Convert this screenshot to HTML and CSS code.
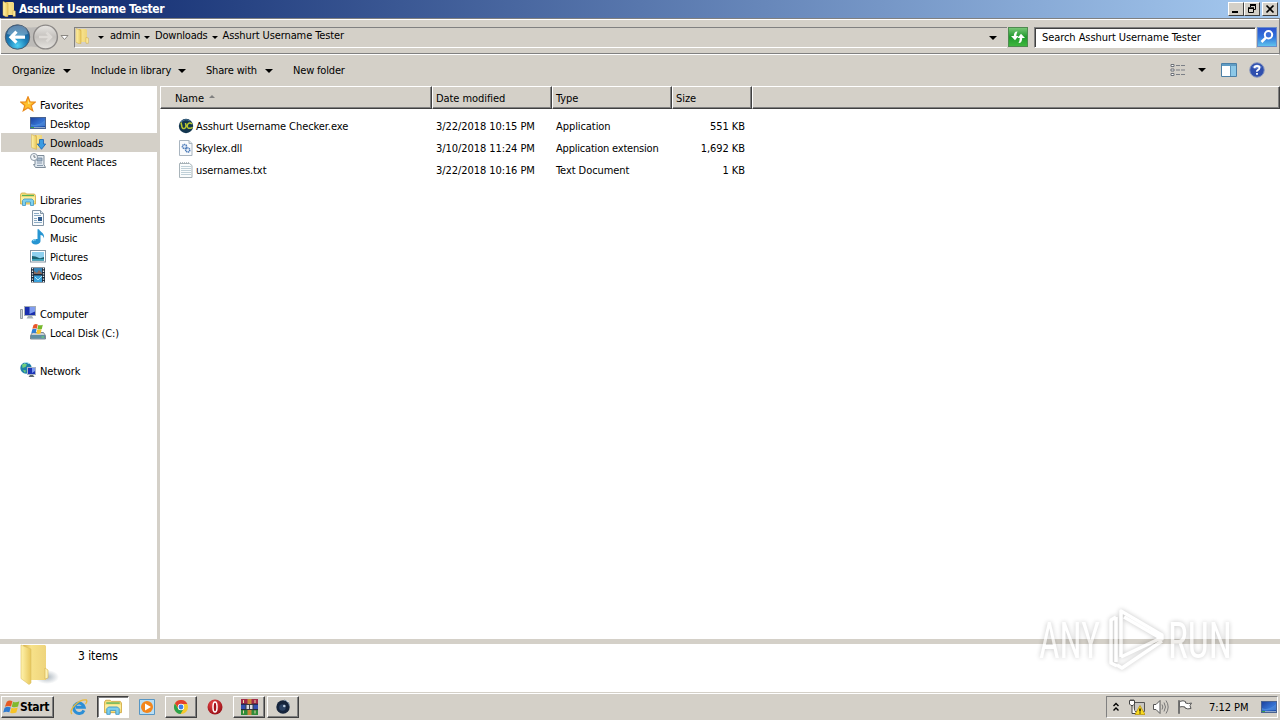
FILE: index.html
```html
<!DOCTYPE html>
<html lang="en">
<head>
    <meta charset="UTF-8">
    <meta name="viewport" content="width=device-width, initial-scale=1.0">
    <title>Asshurt Username Tester</title>
    <link rel="stylesheet" href="styles.css">
</head>
<body>

<!-- Shared icons -->
<svg class="sprite" width="0" height="0">
    <defs>
        <linearGradient id="gold" x1="0" x2="1"><stop offset="0" stop-color="#fff3ac"/><stop offset="1" stop-color="#e8c75c"/></linearGradient>
        <linearGradient id="goldBack" x1="0" x2="1"><stop offset="0" stop-color="#d9b14a"/><stop offset=".35" stop-color="#f7e28a"/><stop offset="1" stop-color="#eed47c"/></linearGradient>
        <linearGradient id="screen" x1="0" y1="0" x2="1" y2="1"><stop offset="0" stop-color="#1c3f9c"/><stop offset=".55" stop-color="#3572d2"/><stop offset="1" stop-color="#16409a"/></linearGradient>
        <radialGradient id="backBall" cx=".5" cy=".85" r=".85"><stop offset="0" stop-color="#4fd0f4"/><stop offset=".45" stop-color="#1c7fb8"/><stop offset="1" stop-color="#1b4f86"/></radialGradient>
        <linearGradient id="grayBall" x1="0" y1="0" x2="0" y2="1"><stop offset="0" stop-color="#e8e6e3"/><stop offset=".5" stop-color="#c4c1bd"/><stop offset="1" stop-color="#e6e4e0"/></linearGradient>
        <linearGradient id="green" x1="0" y1="0" x2="0" y2="1"><stop offset="0" stop-color="#7cc87a"/><stop offset=".5" stop-color="#1f9a2c"/><stop offset="1" stop-color="#3fb83e"/></linearGradient>
        <linearGradient id="blue" x1="0" y1="0" x2="0" y2="1"><stop offset="0" stop-color="#2c50cc"/><stop offset=".5" stop-color="#2f74dc"/><stop offset="1" stop-color="#62c6ee"/></linearGradient>
        <radialGradient id="redBall" cx=".4" cy=".3" r=".8"><stop offset="0" stop-color="#ec4a4a"/><stop offset="1" stop-color="#8f0810"/></radialGradient>

        <symbol id="folder" viewBox="0 0 16 16">
            <path d="M5 1h7l1 1v12H5z" fill="url(#goldBack)"/>
            <path d="M2 0.5l5 2v13l-2 .3-3-1.6z" fill="url(#gold)" stroke="#d5ad45" stroke-width=".5"/>
            <path d="M12 9.500l2.300.5v5.300h-2.300z" fill="#fff0a8" stroke="#cfa43a" stroke-width=".5"/>
        </symbol>
        <symbol id="star" viewBox="0 0 16 16">
            <path d="M8 .8l2 5 5.400.2-4.200 3.500 1.500 5.200L8 11.800l-4.700 2.900 1.500-5.200L.6 6 6 5.800z" fill="#ffc02c" stroke="#ea8a1c" stroke-width="1.200"/>
            <path d="M8 3.300l1 3.300 2.500.4L8 8z" fill="#ffe98a"/>
        </symbol>
        <symbol id="desktop" viewBox="0 0 16 16">
            <rect x=".5" y="2.500" width="15" height="11" fill="url(#screen)" stroke="#4a6390"/>
            <path d="M1 9q6 3 14-4v6H1z" fill="#5b9be6" opacity=".55"/>
            <path d="M1 12.500h14" stroke="#8fa6c8"/><path d="M1 12.500h3" stroke="#3aa04a"/>
        </symbol>
        <symbol id="downloads" viewBox="0 0 16 16">
            <path d="M5 1h7v13H5z" fill="url(#goldBack)"/>
            <path d="M1.500.5l5 2v13l-5-2z" fill="url(#gold)" stroke="#d5ad45" stroke-width=".5"/>
            <path d="M9.500 5.500h4v4.500h2.200l-4.200 5.300L7.300 10h2.200z" fill="#3a9be2" stroke="#1a5fb0" stroke-width=".8"/>
        </symbol>
        <symbol id="recent" viewBox="0 0 16 16">
            <path d="M5 2.500h9v9l1.500 3H5.500l-2-3H5z" fill="#dfe7ee" stroke="#7e8c99"/>
            <path d="M7 5h5v3H7zM7 10h5M7 12.500h6" fill="#9fb4c6" stroke="#71879c" stroke-width=".8"/>
            <circle cx="4" cy="4" r="3.500" fill="#f5f8fb" stroke="#8b98a6"/><path d="M4 2v2.200h1.700" fill="none" stroke="#4b5866" stroke-width=".8"/>
        </symbol>
        <symbol id="libraries" viewBox="0 0 16 16">
            <path d="M.5 3.500l1-1.500h4l1 1h8l1 1.500v8.500H.5z" fill="#f6df7c" stroke="#d0a843" stroke-width=".8"/>
            <path d="M2 4.500h12" stroke="#58b058" stroke-width="1.200"/><path d="M1 6h14v4H1z" fill="#fbeea0"/>
            <path d="M2.500 14.500v-5l1.500-1.500h8l1.500 1.500v5h-3v-3.500h-5v3.500z" fill="#7fd0ee" stroke="#3e95c4" stroke-width=".8"/>
        </symbol>
        <symbol id="documents" viewBox="0 0 16 16">
            <path d="M2.500.5h8l3 3v12h-11z" fill="#f7fafc" stroke="#8294a5"/><path d="M10.500.5v3h3" fill="#d5e1ea" stroke="#8294a5"/>
            <path d="M4 3.500h5M4 5.500h7M4 8.500h3M4 10.500h3M4 12.500h8" stroke="#8cabc4"/><path d="M8 7h4v4H8z" fill="#2f5b8e"/>
        </symbol>
        <symbol id="music" viewBox="0 0 16 16">
            <path d="M7.500 .3h1.500c1 3 6 3.300 5 9.200-.5-2.500-2-3.500-3.500-3.500V12c0 2.200-2.500 3.500-5 3.500S1.300 14 1.500 12.500 4 9.500 7.500 10z" fill="#2795d2"/>
            <path d="M3 12q1-1.300 3-1.200" stroke="#8fe0fa" fill="none"/>
        </symbol>
        <symbol id="pictures" viewBox="0 0 16 16">
            <rect x=".5" y="2.500" width="15" height="11.500" fill="#fff" stroke="#8896a3"/>
            <path d="M2 4h12v8.500H2z" fill="#8fd0ee"/><path d="M2 8q4 0 6 1.500t6-.5v3.500H2z" fill="#1c6270"/><path d="M2 11h12v1.500H2z" fill="#39a0b8"/>
        </symbol>
        <symbol id="videos" viewBox="0 0 16 16">
            <path d="M1 .5h14v15H1z" fill="#1c2a3a"/>
            <path d="M4 1h8v6H4z" fill="#3a85b8"/><path d="M4 8.500h8V15H4z" fill="#3aa2dc"/>
            <path d="M4 4l3 2 2-3 3 3v1H4z" fill="#8a6a5c"/><path d="M5 10l3 3 4-4" stroke="#a8e4f8" fill="none"/>
            <path d="M2.500 1v15M13.500 1v15" stroke="#e6edf2" stroke-width="1.300" stroke-dasharray="1.300 1.300"/>
        </symbol>
        <symbol id="computer" viewBox="0 0 16 16">
            <path d="M.5 4.500h2v9h-2z" fill="#cdd3d8" stroke="#7e8890" stroke-width=".8"/>
            <rect x="4.500" y="1.500" width="11" height="9" fill="#1a2fae" stroke="#a3adb6"/>
            <path d="M9.500 2H15v4.500L9.500 9z" fill="#7f9cf0"/><path d="M8 11h4l1.500 2.500h-7z" fill="#a9b3ba"/>
        </symbol>
        <symbol id="disk" viewBox="0 0 16 16">
            <path d="M2.500 8.500h11l2 3v3.500H.5v-3.500z" fill="#c8ced3" stroke="#66727b" stroke-width=".8"/><path d="M1 11h14v3.700H1z" fill="#5f8ea2"/><path d="M11.500 13h2.500" stroke="#6fe06a"/>
            <path d="M3.500.9q2.300-1.500 4.300-.3L6.800 4.700Q5 3.600 2.400 4.800z" fill="#e8562a"/><path d="M8.300.9q2 .9 4.500-.2L11.800 4.900q-2.300 1-4.500 0z" fill="#76b82c"/>
            <path d="M2.300 5.300q2.300-1.200 4.300-.1l-1 4q-2-1-4.300 0z" fill="#2d7fd6"/><path d="M7.200 5.400q2.200.9 4.400.1l-1 4q-2.200.8-4.300.1z" fill="#f8c42c"/>
        </symbol>
        <symbol id="network" viewBox="0 0 16 16">
            <circle cx="6" cy="6" r="5.700" fill="#1f7fa8"/><path d="M2 2.500Q5 1 7 2.500L5.500 5 2.500 6zM3 8l3 .5L5 11z" fill="#6fd07c"/>
            <path d="M4 1q3-1.500 5 .5" stroke="#bdf0fa" fill="none"/>
            <rect x="7.500" y="5.500" width="8" height="7" fill="#1c34b6" stroke="#aab4c6"/><path d="M12 6h3v3l-3 2z" fill="#7b9af0"/><path d="M10 13h3l1.500 2H8.500z" fill="#5c6870"/>
        </symbol>
        <symbol id="exe" viewBox="0 0 16 16">
            <circle cx="8" cy="8" r="7.200" fill="#12354f"/><path d="M3 4q4-4 9-1" stroke="#4f7da0" fill="none"/>
            <path d="M3 4.500l1 4.500q.5 2 2.300 1.500T8 8L7.500 5M14 6q-1.500-1.500-3.200-.8T9.300 8.300t2.700 2T14 9" stroke="#b9c832" stroke-width="1.500" fill="none"/>
        </symbol>
        <symbol id="dll" viewBox="0 0 16 16">
            <path d="M1.500.5h9.500l3 3v12H1.500z" fill="#f8fafc" stroke="#a9b5c0"/><path d="M11 .5v3h3" fill="#dde5ec" stroke="#a9b5c0"/>
            <circle cx="6.500" cy="6.500" r="2.100" fill="#e6eef8" stroke="#4a79b8" stroke-width="1.500" stroke-dasharray="1.200 .5"/><circle cx="9.700" cy="10" r="2.100" fill="#e6eef8" stroke="#4a79b8" stroke-width="1.500" stroke-dasharray="1.200 .5"/>
        </symbol>
        <symbol id="txt" viewBox="0 0 16 16">
            <path d="M1.500 1.500h10l2.500 2v12H1.500z" fill="#fafcfc" stroke="#a9b4ba"/><path d="M2 .8h10" stroke="#9aa6ac" stroke-dasharray="1 1"/>
            <path d="M3 4.500h10M3 6.500h10M3 8.500h10M3 10.500h10M3 12.500h10" stroke="#c0d0d8"/>
        </symbol>
        <symbol id="flag" viewBox="0 0 18 18">
            <path d="M4 3q3-2.500 6-.5L8.500 8Q5.500 6.500 2 8.200z" fill="#e65a24"/><path d="M10.600 2.800q3 1.500 6.700-.3L15.900 8q-3.200 1.600-6.600.2z" fill="#80b92e"/>
            <path d="M1.700 9.200q3.300-1.800 6.500-.3L6.700 14Q3.500 12.600.2 14.300z" fill="#2f7bd0"/><path d="M9 9.200q3.300 1.400 6.600-.2l-1.500 5.300q-3.200 1.600-6.500.3z" fill="#f7c326"/>
        </symbol>
    </defs>
</svg>

<div class="title-bar">
    <svg class="icon"><use href="#folder"/></svg>
    <h1>Asshurt Username Tester</h1>
    <div class="window-buttons">
        <button><svg width="14" height="12"><path d="M3 9h6" stroke="#000" stroke-width="2"/></svg></button>
        <button><svg width="14" height="12"><path d="M5.500 4V2.500h5v4H9M5 2h6M3.500 5.500h5v4h-5zM3 5.500h6" stroke="#000" fill="none"/><path d="M3 5h6M5 1.800h6" stroke="#000" stroke-width="1.500"/></svg></button>
        <button class="close"><svg width="14" height="12"><path d="M3.500 2.500l7 7M10.500 2.500l-7 7" stroke="#000" stroke-width="1.700"/></svg></button>
    </div>
</div>

<div class="nav-bar">
    <svg class="nav-buttons" width="72" height="30" viewBox="0 0 72 30">
        <path d="M17 3q14 5 28 0v24q-14-5-28 0z" fill="#bdbbb8"/>
        <circle cx="17.500" cy="15" r="12.200" fill="url(#backBall)" stroke="#4b5d70"/>
        <path d="M7 12q1-8 10.500-8.500T28 12q-10 3-21 0z" fill="#fff" opacity=".3"/>
        <path d="M25 15.200H12M16.500 9.700L11 15.200l5.500 5.500" stroke="#fff" stroke-width="3.200" fill="none"/>
        <circle cx="45.500" cy="15" r="11.900" fill="url(#grayBall)" stroke="#8c8987" stroke-width="1.400"/>
        <path d="M39 15h11M46.500 10.500L51 15l-4.500 4.500" stroke="#dedbd7" stroke-width="2.500" fill="none"/>
        <path d="M61 13.500h7L64.500 17.500z" fill="#fff" stroke="#8a8782"/>
    </svg>
    <div class="address">
        <svg class="icon"><use href="#folder"/></svg>
        <i class="arrow"></i><span class="crumb">admin</span>
        <i class="arrow"></i><span class="crumb">Downloads</span>
        <i class="arrow"></i><span class="crumb current">Asshurt Username Tester</span>
        <i class="arrow big last"></i>
    </div>
    <svg class="refresh" width="20" height="20" viewBox="0 0 20 20">
        <rect x=".5" y=".5" width="19" height="19" fill="url(#green)" stroke="#4e8a50"/>
        <path d="M9.500 4.500Q6 4 5.800 9H3l4 4.200L10.500 9H8.300q0-2 1.200-4.500zM10.500 16q3.500.5 3.700-5H17l-4-4.200L9.500 11h2.300q0 2.500-1.300 5z" fill="#fff"/>
    </svg>
    <div class="search">Search Asshurt Username Tester</div>
    <svg class="go" width="20" height="20" viewBox="0 0 20 20">
        <rect x=".5" y=".5" width="19" height="19" fill="url(#blue)" stroke="#6a8cc8"/>
        <circle cx="11.500" cy="7.800" r="3.700" fill="#3b6fd8" stroke="#fff" stroke-width="2"/><path d="M8.700 10.800L4.500 15" stroke="#fff" stroke-width="2.600"/>
    </svg>
</div>

<div class="toolbar">
    <span class="organize">Organize<i class="arrow big"></i></span>
    <span class="include">Include in library<i class="arrow big"></i></span>
    <span class="share">Share with<i class="arrow big"></i></span>
    <span>New folder</span>
    <div class="view-tools">
        <svg width="16" height="14"><path d="M1 1.500h3v2H1zM1 6h3v2H1zM1 10.500h3v2H1z" fill="#fff" stroke="#6c7178"/><path d="M6 2.500h4m1 0h4M6 7h4m1 0h4M6 11.500h4m1 0h4" stroke="#7b7f86"/></svg>
        <i class="arrow big"></i>
        <svg class="pane" width="16" height="14"><path d="M.5.500h15v13H.5z" fill="#fff" stroke="#4b7fa6"/><path d="M1 2h14" stroke="#5f9cc4" stroke-width="2"/><path d="M10 3h5v10h-5z" fill="#8cc8e8"/><path d="M9.500 3v10" stroke="#5a93bb"/></svg>
        <svg width="16" height="16" viewBox="0 0 16 16"><circle cx="8" cy="8" r="7.300" fill="#2f4fae" stroke="#8d9bc0"/><path d="M3 5q5-5 10 0-5 3-10 0z" fill="#8fa9e6" opacity=".7"/><path d="M5.500 6.300q0-2.300 2.500-2.300t2.500 2q0 1.200-1.400 1.900T8 9.800M8 11v1.800" stroke="#fff" stroke-width="1.800" fill="none"/></svg>
    </div>
</div>

<div class="main">
    <div class="sidebar">
        <div class="group"><svg class="icon"><use href="#star"/></svg>Favorites</div>
        <div class="place"><svg class="icon"><use href="#desktop"/></svg>Desktop</div>
        <div class="place selected"><svg class="icon"><use href="#downloads"/></svg>Downloads</div>
        <div class="place"><svg class="icon"><use href="#recent"/></svg>Recent Places</div>

        <div class="group"><svg class="icon"><use href="#libraries"/></svg>Libraries</div>
        <div class="place"><svg class="icon"><use href="#documents"/></svg>Documents</div>
        <div class="place"><svg class="icon"><use href="#music"/></svg>Music</div>
        <div class="place"><svg class="icon"><use href="#pictures"/></svg>Pictures</div>
        <div class="place"><svg class="icon"><use href="#videos"/></svg>Videos</div>

        <div class="group"><svg class="icon"><use href="#computer"/></svg>Computer</div>
        <div class="place"><svg class="icon"><use href="#disk"/></svg>Local Disk (C:)</div>

        <div class="group"><svg class="icon"><use href="#network"/></svg>Network</div>
    </div>

    <div class="files">
        <div class="row head">
            <span class="name">Name<i class="sort"></i></span>
            <span>Date modified</span>
            <span>Type</span>
            <span>Size</span>
            <span></span>
        </div>
        <div class="rows">
            <div class="row">
                <span class="name"><svg class="icon"><use href="#exe"/></svg>Asshurt Username Checker.exe</span>
                <span>3/22/2018 10:15 PM</span><span>Application</span><span class="size">551 KB</span>
            </div>
            <div class="row">
                <span class="name"><svg class="icon"><use href="#dll"/></svg>Skylex.dll</span>
                <span>3/10/2018 11:24 PM</span><span class="long">Application extension</span><span class="size">1,692 KB</span>
            </div>
            <div class="row">
                <span class="name"><svg class="icon"><use href="#txt"/></svg>usernames.txt</span>
                <span>3/22/2018 10:16 PM</span><span>Text Document</span><span class="size">1 KB</span>
            </div>
        </div>
    </div>
</div>

<div class="details">
    <svg class="big-folder" width="40" height="44" viewBox="0 0 40 44">
        <defs><radialGradient id="shade"><stop offset="0" stop-color="#8a98a4" stop-opacity=".7"/><stop offset="1" stop-color="#8a98a4" stop-opacity="0"/></radialGradient></defs>
        <ellipse cx="27" cy="33" rx="12" ry="7" fill="url(#shade)"/>
        <path d="M3 1h22l1 1v34H11z" fill="url(#goldBack)"/>
        <path d="M1 1l10 4v34l-2 1.500-8-6z" fill="url(#gold)" stroke="#dcbf62" stroke-width=".6"/>
        <path d="M25 24l3 2v8l-3 1z" fill="#fdf2b6" stroke="#d6b34e" stroke-width=".6"/>
    </svg>
    <span>3 items</span>
</div>

<div class="taskbar">
    <button class="start"><svg width="17" height="17"><use href="#flag"/></svg>Start</button>
    <div class="task ie">
        <svg width="18" height="18" viewBox="0 0 18 18"><path d="M13.900 12.300A5.200 5.200 0 1 1 14.200 9.300H6" stroke="#2c8fd6" stroke-width="3" fill="none"/><path d="M2 16Q-1 13 5 7T16.500 2Q17.500 4 15.500 6" stroke="#e9b93a" stroke-width="1.300" fill="none"/></svg>
    </div>
    <div class="task active"><svg width="18" height="18"><use href="#libraries"/></svg></div>
    <div class="task">
        <svg width="16" height="16"><path d="M.5.500h15v15H.5z" fill="#b9def4" stroke="#5796c4"/><circle cx="8" cy="8" r="6" fill="#f3861c"/><path d="M6 4.500l6 3.500-6 3.500z" fill="#fff"/></svg>
    </div>
    <div class="task raised">
        <svg width="16" height="16" viewBox="0 0 16 16"><circle cx="8" cy="8" r="7" fill="#f7c92c"/><path d="M2 4.300A7 7 0 0 1 14.300 5H8a3 3 0 0 0-3 4z" fill="#e2402f"/><path d="M1.900 4.500A7 7 0 0 0 7.500 15l3-5-4.500 1z" fill="#2ba24c"/><circle cx="8" cy="8" r="3.200" fill="#fff"/><circle cx="8" cy="8" r="2.400" fill="#3c7ee8"/></svg>
    </div>
    <div class="task">
        <svg width="16" height="16"><circle cx="8" cy="8" r="7.500" fill="url(#redBall)"/><ellipse cx="8" cy="8" rx="2" ry="5" fill="#a81018" stroke="#fff" stroke-width="1.500"/></svg>
    </div>
    <div class="task raised">
        <svg width="17" height="16"><path d="M0 0h17v5H0z" fill="#a32a48"/><path d="M0 5h17v5.500H0z" fill="#3350b0"/><path d="M0 10.500h17V16H0z" fill="#2f8c3a"/><path d="M0 5.200h17M0 10.600h17" stroke="#1d2030"/><path d="M6.500 0h4v16h-4z" fill="#c88838"/><path d="M5 5.500h7v5H5z" fill="#d9dde4" stroke="#3a3a40"/><path d="M8.500 6v4" stroke="#444"/><path d="M2.500 1v3M14 1v3M2.500 11.500v3M14 11.500v3" stroke="#e8d6a0"/></svg>
    </div>
    <div class="task raised">
        <svg width="16" height="16"><circle cx="8" cy="8" r="6.700" fill="#15243c"/><circle cx="7.500" cy="8.500" r="3.300" fill="#2a4163"/><circle cx="9.300" cy="7" r="1.300" fill="#b9c9dc"/><path d="M9 1q5 1 5.500 6" stroke="#7e93ac" fill="none"/><path d="M12 1.500l1.500 1.500" stroke="#fff"/></svg>
    </div>

    <div class="tray">
        <svg class="chevrons" width="6" height="10"><path d="M.5 4L3 1.500 5.500 4M.5 8.500L3 6l2.500 2.500" stroke="#000" stroke-width="1.400" fill="none"/></svg>
        <svg class="plug" width="16" height="16"><path d="M5.500 3.500h10v9h-10z" fill="#c9c7c2" stroke="#555"/><path d="M.5 1.500h5V5L4 6.500H2L.5 5zM3 7v7.500h4" fill="#fff" stroke="#444"/><path d="M2 0v2M4 0v2" stroke="#555"/><path d="M11 6.500l5 9H6z" fill="#fadb20" stroke="#b58e00" stroke-width=".7"/><path d="M11 9.500v3m0 1v1" stroke="#000" stroke-width="1.300"/></svg>
        <svg class="sound" width="16" height="16"><path d="M.5 5.500H3l4-4v13l-4-4H.5z" fill="#fff" stroke="#555"/><path d="M9 5.500q1.700 2.500 0 5M11 3.500q3 4.500 0 9M13 1.500q4.300 6.500 0 13" stroke="#777" fill="none"/></svg>
        <svg class="action" width="16" height="16"><path d="M2.500 2.500q4-1.500 6 0v1.500q3 1.200 6 0l-1.500 2.500 1 3q-3.500 1-6-.5V8q-3-.8-5.500 0z" fill="#fff" stroke="#555"/><path d="M1.500 1.500h1v13h-1z" fill="#fff" stroke="#555" stroke-width=".8"/></svg>
        <span class="clock">7:12 PM</span>
        <svg class="show" width="16" height="16"><use href="#desktop"/></svg>
    </div>
</div>

<svg class="watermark" width="220" height="80" viewBox="0 0 220 80">
    <g class="glow">
        <text x="9" y="58" textLength="61" lengthAdjust="spacingAndGlyphs">ANY</text>
        <text x="138" y="58" textLength="64" lengthAdjust="spacingAndGlyphs">RUN</text>
        <path d="M91 57V11l41 24v4L94 17"/>
        <path d="M91 57l40-19M132 41L92 68l-5-3"/>
        <path d="M86 17l-5 3v43l6 3M86 17v45"/>
    </g>
</svg>

</body>
</html>
```
FILE: styles.css
```css
* {
    box-sizing: border-box;
}

body {
    margin: 0;
    width: 1280px;
    height: 720px;
    overflow: hidden;
    display: flex;
    flex-direction: column;
    background-color: #d4d0c8;
    color: #000;
    font-family: Tahoma, "DejaVu Sans Condensed", "DejaVu Sans", sans-serif;
    font-stretch: condensed;
    font-size: 11px;
    line-height: 14px;
    letter-spacing: -0.07px;
    white-space: nowrap;
}

.sprite {
    position: absolute;
}

svg {
    display: block;
    flex: none;
}

.icon {
    width: 16px;
    height: 16px;
}

.arrow {
    display: inline-block;
    border: 3px solid transparent;
    border-top-color: #000;
    border-bottom: 0;
}

.arrow.big {
    border-width: 4px;
    border-bottom: 0;
}

/* Title bar */
.title-bar {
    height: 18px;
    display: flex;
    align-items: center;
    padding: 0 2px 0 1px;
    background-image: linear-gradient(to right, #0a246a, #a6caf0);
    color: #fff;
}

h1 {
    margin: 0 auto 0 2px;
    font-size: 12px;
    letter-spacing: -0.35px;
}

.window-buttons {
    display: flex;
}

.window-buttons button {
    width: 16px;
    height: 14px;
    padding: 0;
    background-color: #d4d0c8;
    border: 1px solid;
    border-color: #fff #404040 #404040 #fff;
}

.window-buttons .close {
    margin-left: 2px;
}

/* Address bar */
.nav-bar {
    height: 37px;
    display: flex;
    align-items: center;
    padding-top: 1px;
    border: 1px solid #808080;
    border-left-color: #fff;
    border-bottom-color: #fff;
    box-shadow: inset 0 1px #fff, inset 0 -1px #808080;
}

.nav-buttons {
    margin-left: -1px;
}

.address {
    width: 933px;
    height: 21px;
    display: flex;
    align-items: center;
    margin: 0 1px 0 2px;
    padding-bottom: 2px;
    border: 1px solid #808080;
    border-right: 0;
    border-bottom-color: #fff;
}

.address .icon {
    margin-left: -1px;
}

.address .arrow {
    margin: 2px 5px 0 4px;
}

.address .icon + .arrow {
    margin: 2px 6px 0 8px;
}

.crumb {
    letter-spacing: -0.2px;
}

.crumb.current {
    letter-spacing: -0.1px;
}

.address .arrow.last {
    margin: 3px 10px 0 auto;
}

.refresh {
    margin-right: 6px;
}

.search {
    width: 222px;
    height: 21px;
    padding: 3px 7px;
    margin-right: 1px;
    background-color: #fff;
    border: 1px solid #808080;
    border-right-color: #fff;
    border-bottom-color: #fff;
    box-shadow: inset 1px 1px #404040;
}

/* Toolbar */
.toolbar {
    height: 31px;
    display: flex;
    align-items: center;
    padding-left: 12px;
}

.toolbar span {
    display: flex;
    align-items: center;
    padding-top: 1px;
}

.toolbar > span {
    letter-spacing: -0.17px;
}

.toolbar span .arrow {
    margin: -1px 0 0 auto;
}

.organize {
    width: 59px;
    margin-right: 20px;
}

.include {
    width: 95px;
    margin-right: 20px;
}

.share {
    width: 67px;
    margin-right: 20px;
}

.view-tools {
    display: flex;
    align-items: center;
    margin: -1px 15px 0 auto;
}

.view-tools .arrow {
    margin: 0 15px 0 12px;
}

.view-tools .pane {
    margin-right: 12px;
}

/* Main area */
.main {
    height: 553px;
    display: flex;
}

.sidebar {
    width: 157px;
    padding: 9px 0 0 1px;
    margin-right: 3px;
    background-color: #fff;
    letter-spacing: -0.15px;
}

.group,
.place {
    height: 19px;
    display: flex;
    align-items: center;
    gap: 4px;
    padding: 3px 0 0 19px;
}

/* keeps the icon centred while the label sits lower */
.group .icon,
.place .icon {
    margin-bottom: 4px;
}

.place {
    padding-left: 29px;
}

.place + .group {
    margin-top: 19px;
}

.selected {
    background-color: #d4d0c8;
}

.files {
    flex: 1;
    background-color: #fff;
}

.row {
    height: 22px;
    display: grid;
    grid-template-columns: 272px 120px 120px 80px 1fr;
    align-items: center;
}

.row span {
    padding-left: 4px;
}

.row .name {
    display: flex;
    align-items: center;
    gap: 2px;
    padding-left: 18px;
}

.row .long {
    letter-spacing: -0.2px;
}

.row .size {
    padding-right: 7px;
    text-align: right;
}

.head {
    height: 23px;
    background-color: #d4d0c8;
}

.row.head span {
    height: 23px;
    padding-top: 5px;
    border: 1px solid;
    border-color: #fff #404040 #404040 #fff;
    box-shadow: inset -1px -1px #808080;
    padding-left: 3px;
}

.row.head .name {
    padding: 2px 0 0 14px;
}

.sort {
    margin: -4px 0 0 3px;
    border: 3px solid transparent;
    border-top: 0;
    border-bottom-color: #808080;
}

.rows {
    padding-top: 6px;
}

.rows .row span {
    padding-top: 2px;
}

.rows .icon {
    margin-bottom: 3px;
}

/* Details pane */
.details {
    height: 48px;
    display: flex;
    margin-top: 5px;
    padding: 0 0 0 20px;
    background-color: #fff;
}

.details span {
    padding: 5px 0 0 18px;
    font-size: 12px;
}

/* Taskbar */
.taskbar {
    height: 27px;
    display: flex;
    align-items: center;
    margin-top: 1px;
    padding: 0 2px 0 1px;
    border-top: 1px solid #fff;
}

.start {
    width: 53px;
    height: 22px;
    display: flex;
    align-items: center;
    padding: 0 0 0 1px;
    margin-right: 9px;
    background-color: #d4d0c8;
    border: 1px solid;
    border-color: #fff #404040 #404040 #fff;
    box-shadow: inset -1px -1px #808080;
    font-family: inherit;
    font-size: 12px;
    font-weight: bold;
    letter-spacing: -0.3px;
}

.task {
    width: 32px;
    height: 22px;
    display: flex;
    align-items: center;
    justify-content: center;
    margin-right: 2px;
    border: 1px solid transparent;
}

.raised {
    border-color: #fff #404040 #404040 #fff;
    box-shadow: inset -1px -1px #808080;
}

.active {
    background-color: #fff;
    border-color: #404040 #fff #fff #404040;
    box-shadow: inset 1px 1px #808080;
}

.tray {
    width: 172px;
    height: 22px;
    display: flex;
    align-items: center;
    margin-left: auto;
    padding-left: 6px;
    border: 1px solid;
    border-color: #808080 #fff #fff #808080;
}

.plug {
    margin-left: 10px;
}

.sound,
.action {
    margin-left: 8px;
}

.clock {
    margin: 1px auto 0 16px;
}

/* Watermark over the bottom right corner */
.watermark {
    position: absolute;
    left: 1030px;
    top: 600px;
    font-family: Roboto, sans-serif;
    font-size: 50px;
    line-height: 60px;
    letter-spacing: 0;
}

.glow {
    fill: none;
    stroke: #fff;
    stroke-width: 3.5px;
    stroke-linejoin: round;
    opacity: 0.65;
    filter: drop-shadow(0 0 2.5px rgba(0, 0, 0, 0.35));
}

.glow text {
    fill: #fff;
    stroke: none;
}
```
